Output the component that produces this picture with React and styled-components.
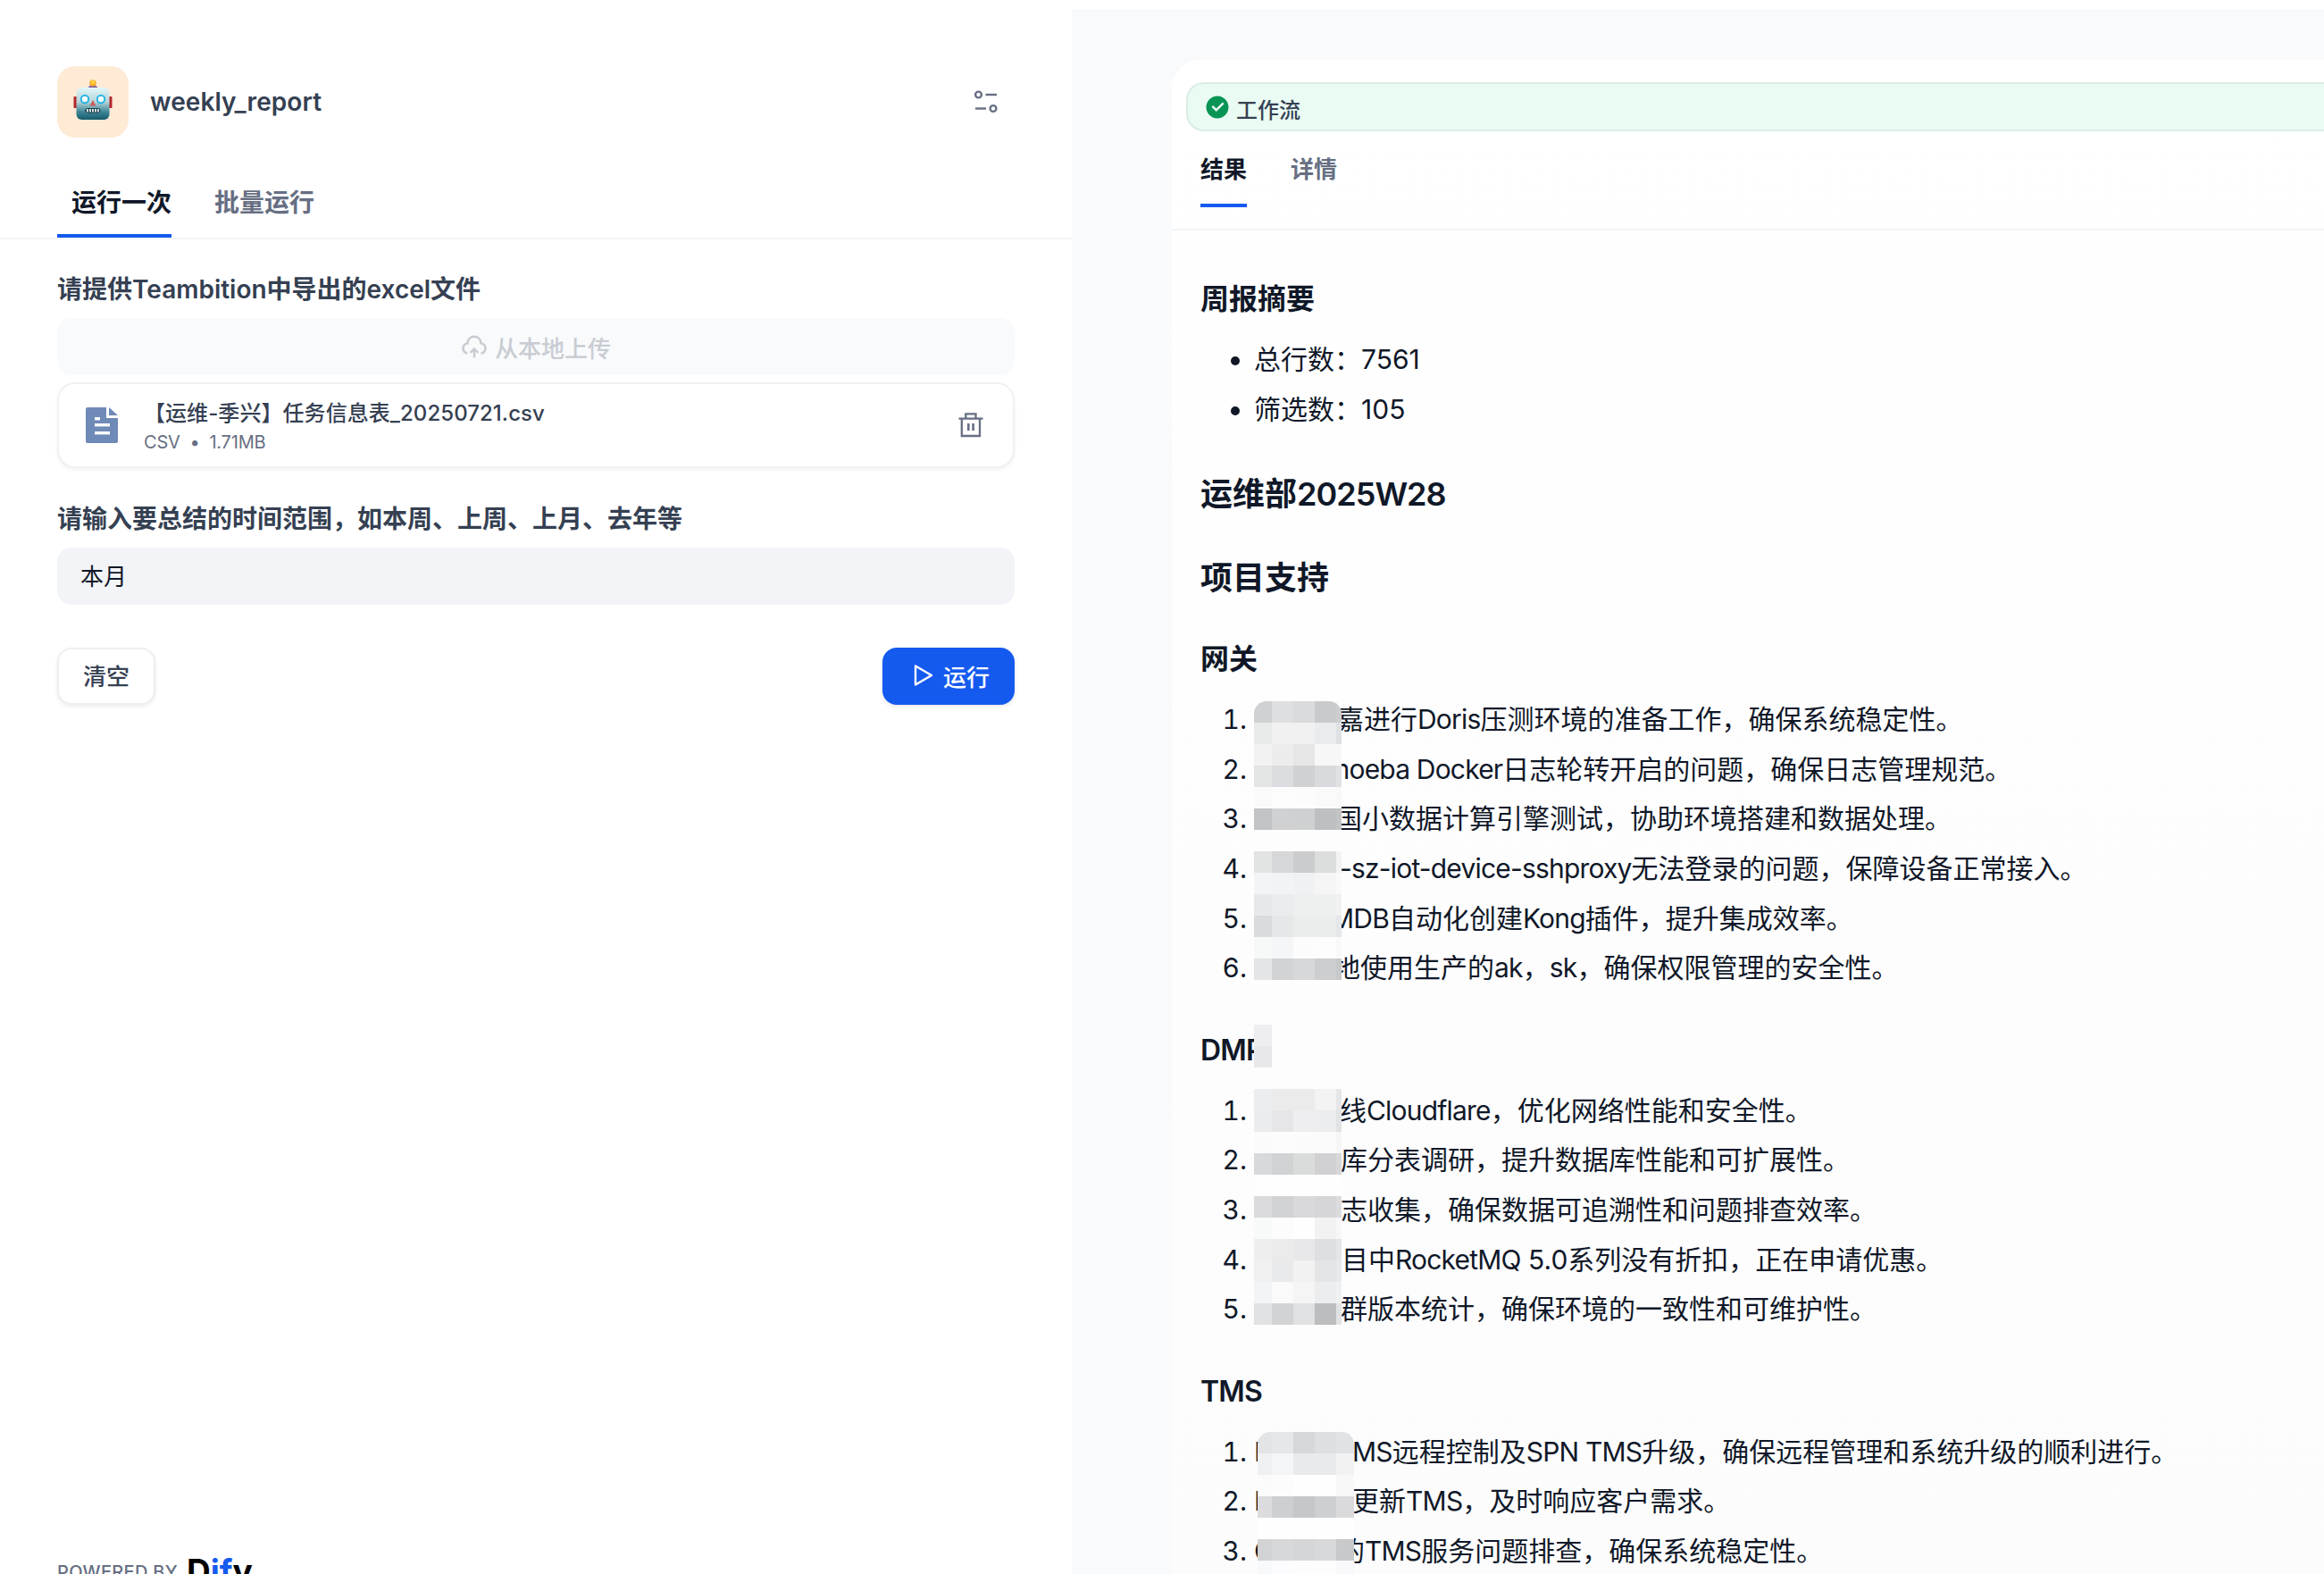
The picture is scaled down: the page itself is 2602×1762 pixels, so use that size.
import React from 'react';
import styled, { createGlobalStyle } from 'styled-components';
import { RiCheckboxCircleFill, RiUploadCloud2Line } from 'react-icons/ri';

const GlobalStyle = createGlobalStyle`
  html, body {
    margin: 0;
    padding: 0;
    background: #ffffff;
    font-family: Inter, "Noto Sans CJK SC", sans-serif;
    color: #101828;
  }
  * { box-sizing: border-box; }
`;

// latin words run a little narrower in the report than plain Inter
const Tight = styled.span`
  letter-spacing: -0.027em;
`;

// pixelated blocks that hide the names in the report
const mosaicTop = {
  cols: [20, 24, 24, 24, 6],
  rows: [
    ['#cfd1d3', '#dedfe0', '#d9dbdd', '#c9cacc', '#cdced0'],
    ['#e9eaea', '#f1f1f2', '#f1f1f2', '#eaebec', '#dfe0e3'],
    ['#f2f2f3', '#ececed', '#e6e6e7', '#f7f7f7', '#f7f7f7'],
    ['#e4e5e5', '#dcdde0', '#d0d1d3', '#d9dade', '#e0e1e3'],
    ['#fafafa', '#fdfdfd', '#fcfcfc', '#fafafa', '#f8f8f8'],
    ['#c2c3c5', '#d0d1d2', '#cfd0d1', '#bebfc1', '#c3c4c6'],
    ['#fdfdfd', '#fdfdfd', '#fdfdfd', '#fdfdfd', '#fdfdfd'],
    ['#e2e3e3', '#d6d7d9', '#cbcccd', '#dcdedd', '#f3f3f3'],
    ['#f3f4f6', '#f2f3f4', '#f0f1f2', '#f5f5f6', '#f9f9f9'],
    ['#e7e8ea', '#ebecee', '#eeefef', '#eeefef', '#f1f1f1'],
    ['#dadbdd', '#e6e7e9', '#ebecec', '#ebecec', '#e6e7e8'],
    ['#f7f8f8', '#f5f6f8', '#fcfcfc', '#fdfdfd', '#f9f9f9'],
    ['#e4e5e7', '#d2d3d5', '#d7d8d9', '#cdced0', '#c7c8ca'],
  ],
};

const mosaicHeading = {
  cols: [20],
  rows: [['#eeeef0'], ['#e8e8ea']],
};

const mosaicDmp = {
  cols: [20, 24, 24, 24, 6],
  rows: [
    ['#ecedef', '#ebebec', '#ebebec', '#f3f3f4', '#e5e6e8'],
    ['#ebecee', '#e6e6e8', '#eeeef0', '#ecedef', '#e2e3e5'],
    ['#fbfbfb', '#fcfcfc', '#fbfbfb', '#fbfbfb', '#f6f6f6'],
    ['#d8d9da', '#d1d2d3', '#dadbdb', '#d1d1d3', '#d8d8da'],
    ['#fefefe', '#fefefe', '#fefefe', '#fefefe', '#fefefe'],
    ['#dbdbdd', '#d1d2d3', '#d9d9db', '#d6d6d8', '#dcdcde'],
    ['#f8f9f9', '#fcfcfc', '#fefefe', '#f2f2f3', '#f7f7f8'],
    ['#eeeeef', '#ebebec', '#e8e8ea', '#dedfe2', '#e4e5e7'],
    ['#f0f0f1', '#e9eaec', '#f2f2f3', '#e4e5e7', '#e8e9ea'],
    ['#f3f4f6', '#f9faf9', '#f5f5f6', '#ecedee', '#eef0f1'],
    ['#e1e2e4', '#d2d3d5', '#e0e1e3', '#bcbdbf', '#e1e2e4'],
  ],
};

const mosaicTms = {
  cols: [16, 24, 24, 24, 20],
  rows: [
    ['#e3e4e6', '#e6e7e9', '#d6d7d9', '#dedfe1', '#e1e2e4'],
    ['#eff0f2', '#f4f5f6', '#e9eaec', '#e9eaec', '#f2f2f3'],
    ['#fbfbfb', '#fcfcfd', '#fefefe', '#fefefe', '#f8f8f8'],
    ['#dcdcde', '#cecfd1', '#c6c7c9', '#cecfd1', '#dadadc'],
    ['#fefefe', '#fefefe', '#fefefe', '#fefefe', '#fefefe'],
    ['#d2d3d5', '#d7d8da', '#d5d6d8', '#d8d9db', '#c8c9cb'],
    ['#f8f9fb', '#fcfcfe', '#fdfdfe', '#fdfdfe', '#f9f9fb'],
  ],
};

const gatewayItems = [
  { w: 93, text: <>嘉进行<Tight>Doris</Tight>压测环境的准备工作，确保系统稳定性。</> },
  { w: 81, text: <><Tight>moeba Docker</Tight>日志轮转开启的问题，确保日志管理规范。</> },
  { w: 91, text: '国小数据计算引擎测试，协助环境搭建和数据处理。' },
  { w: 96, text: <><Tight>-sz-iot-device-sshproxy</Tight>无法登录的问题，保障设备正常接入。</> },
  { w: 85, text: <><Tight>MDB</Tight>自动化创建<Tight>Kong</Tight>插件，提升集成效率。</> },
  { w: 89, text: <>地使用生产的<Tight>ak</Tight>，<Tight>sk</Tight>，确保权限管理的安全性。</> },
];

const dmpItems = [
  { w: 96, text: <>线<Tight>Cloudflare</Tight>，优化网络性能和安全性。</> },
  { w: 97, text: '库分表调研，提升数据库性能和可扩展性。' },
  { w: 97, text: '志收集，确保数据可追溯性和问题排查效率。' },
  { w: 98, text: <>目中<Tight>RocketMQ</Tight> 5.0系列没有折扣，正在申请优惠。</> },
  { w: 97, text: '群版本统计，确保环境的一致性和可维护性。' },
];

const tmsItems = [
  { lead: 'I', w: 102, text: <><Tight>MS</Tight>远程控制及<Tight>SPN TMS</Tight>升级，确保远程管理和系统升级的顺利进行。</> },
  { lead: 'I', w: 102, text: <>更新<Tight>TMS</Tight>，及时响应客户需求。</> },
  { lead: 'C', w: 72, text: <>的<Tight>TMS</Tight>服务问题排查，确保系统稳定性。</> },
];

const Mosaic = ({ data, left, top, round }) => {
  const width = data.cols.reduce((sum, c) => sum + c, 0);
  const height = data.rows.length * 24;
  return (
    <MosaicSvg $left={left} $top={top} $round={round} width={width} height={height} viewBox={`0 0 ${width} ${height}`}>
      {data.rows.map((row, r) => {
        let x = 0;
        return row.map((color, c) => {
          const cell = <rect key={`${r}-${c}`} x={x} y={r * 24} width={data.cols[c]} height={24} fill={color} />;
          x += data.cols[c];
          return cell;
        });
      })}
    </MosaicSvg>
  );
};

const RobotIcon = () => (
  <svg width="44" height="46" viewBox="0 0 44 46">
    <defs>
      <linearGradient id="robotHead" x1="0" y1="0" x2="0" y2="1">
        <stop offset="0" stopColor="#e2f6f9" />
        <stop offset="0.45" stopColor="#b4d4d9" />
        <stop offset="0.75" stopColor="#3f8798" />
        <stop offset="1" stopColor="#145a6c" />
      </linearGradient>
      <radialGradient id="robotBall" cx="0.5" cy="0.35" r="0.6">
        <stop offset="0" stopColor="#ffe14d" />
        <stop offset="1" stopColor="#f59a23" />
      </radialGradient>
    </defs>
    <rect x="0.5" y="20" width="4" height="13" rx="1" fill="#b3282d" />
    <rect x="39.5" y="20" width="4" height="13" rx="1" fill="#b3282d" />
    <ellipse cx="22" cy="10" rx="5" ry="2.6" fill="#7a5c9e" />
    <circle cx="22" cy="5" r="3.8" fill="url(#robotBall)" />
    <rect x="3.5" y="10" width="37" height="36" rx="6" fill="url(#robotHead)" />
    <circle cx="13" cy="23" r="4.2" fill="#ffffff" stroke="#25b4e4" strokeWidth="2" />
    <circle cx="31" cy="23" r="4.2" fill="#ffffff" stroke="#25b4e4" strokeWidth="2" />
    <path d="M22 24 L25.4 30.5 H18.6 Z" fill="#cf5a57" />
    <rect x="13.5" y="33" width="17" height="5.4" rx="2.7" fill="#17404a" />
    <path d="M16 34 V37.4 M19 34 V37.4 M22 34 V37.4 M25 34 V37.4 M28 34 V37.4" stroke="#e8eef0" strokeWidth="1.8" />
  </svg>
);

const SettingsIcon = () => (
  <svg width="28" height="28" viewBox="0 0 28 28" fill="none" stroke="#676f83" strokeWidth="2.4">
    <circle cx="5.5" cy="6" r="3.4" />
    <path d="M13.5 6 H26" />
    <path d="M2 21.5 H14" />
    <circle cx="22" cy="21.5" r="3.4" />
  </svg>
);

const FileIcon = () => (
  <svg width="36" height="40" viewBox="0 0 36 40" fill="#6f8ab7">
    <path d="M2 0 H23 V12 H36 V38 A2 2 0 0 1 34 40 H2 A2 2 0 0 1 0 38 V2 A2 2 0 0 1 2 0 Z" />
    <path d="M26 0 L36 9 H26 Z" />
    <rect x="10" y="11" width="6" height="3.4" fill="#ffffff" />
    <rect x="10" y="18" width="17" height="3.4" fill="#ffffff" />
    <rect x="10" y="27" width="17" height="3.4" fill="#ffffff" />
  </svg>
);

const TrashIcon = () => (
  <svg width="28" height="28" viewBox="0 0 28 28" fill="none" stroke="#676f83" strokeWidth="2.3">
    <path d="M8.3 6 V1.4 H19.5 V6" />
    <path d="M0.5 6.6 H27.5" />
    <path d="M3.8 6.6 V26 H24 V6.6" />
    <path d="M11.3 12 V20 M16.6 12 V20" strokeWidth="2.6" />
  </svg>
);

const PlayIcon = () => (
  <svg width="24" height="26" viewBox="0 0 24 26" fill="none" stroke="#ffffff" strokeWidth="2.4" strokeLinejoin="round">
    <path d="M3 2.5 L21 13 L3 23.5 Z" />
  </svg>
);

const ReportList = ({ items }) =>
  items.map((item, i) => (
    <li key={i}>
      {item.lead}
      <Hidden $w={item.w} />
      {item.text}
    </li>
  ));

export default function App() {
  return (
    <>
      <GlobalStyle />
      <Page>
        <LeftPanel>
          <AppHeader>
            <Avatar>
              <RobotIcon />
            </Avatar>
            <AppName>weekly_report</AppName>
            <SettingsButton>
              <SettingsIcon />
            </SettingsButton>
          </AppHeader>

          <RunTabs>
            <RunTab $active>运行一次</RunTab>
            <RunTab>批量运行</RunTab>
          </RunTabs>

          <Form>
            <Label>请提供Teambition中导出的excel文件</Label>
            <UploadBox>
              <RiUploadCloud2Line size={30} />
              从本地上传
            </UploadBox>
            <FileCard>
              <FileIcon />
              <FileInfo>
                <FileName>【运维-季兴】任务信息表_20250721.csv</FileName>
                <FileMeta>CSV&nbsp;&nbsp;•&nbsp;&nbsp;1.71MB</FileMeta>
              </FileInfo>
              <TrashIcon />
            </FileCard>

            <Label $second>请输入要总结的时间范围，如本周、上周、上月、去年等</Label>
            <TextInput>本月</TextInput>

            <Actions>
              <ClearButton>清空</ClearButton>
              <RunButton>
                <PlayIcon />
                运行
              </RunButton>
            </Actions>
          </Form>

          <Footer>
            <PoweredBy>POWERED BY</PoweredBy>
            <DifyMark>
              D<DifyBlue>if</DifyBlue>y
            </DifyMark>
          </Footer>
        </LeftPanel>

        <RightPanel>
          <ResultCard>
            <StatusBar>
              <RiCheckboxCircleFill size={30} color="#079455" />
              <StatusText>工作流</StatusText>
            </StatusBar>
            <ResultTabs>
              <ResultTab $active>结果</ResultTab>
              <ResultTab>详情</ResultTab>
            </ResultTabs>

            <Report>
              <H3 $first>周报摘要</H3>
              <BulletList>
                <li>总行数：7561</li>
                <li>筛选数：105</li>
              </BulletList>

              <H2>
                运维部<Tight>2025W28</Tight>
              </H2>
              <H2>项目支持</H2>

              <H3>网关</H3>
              <NumberList>
                <ReportList items={gatewayItems} />
                <Mosaic data={mosaicTop} left={60} top={7} round />
              </NumberList>

              <H3>
                <Tight>DMP</Tight>
                <Mosaic data={mosaicHeading} left={60} top={-5} />
              </H3>
              <NumberList>
                <ReportList items={dmpItems} />
                <Mosaic data={mosaicDmp} left={60} top={3} />
              </NumberList>

              <H3>
                <Tight>TMS</Tight>
              </H3>
              <NumberList>
                <ReportList items={tmsItems} />
                <Mosaic data={mosaicTms} left={64} top={5} round />
              </NumberList>
            </Report>
          </ResultCard>
        </RightPanel>
      </Page>
    </>
  );
}

const Page = styled.div`
  display: flex;
  width: 2602px;
  height: 1762px;
  overflow: hidden;
`;

const LeftPanel = styled.section`
  display: flex;
  flex-direction: column;
  width: 1200px;
  flex-shrink: 0;
  padding-top: 74px;
  background: #ffffff;
`;

const AppHeader = styled.div`
  display: flex;
  align-items: center;
  padding: 0 64px;
`;

const Avatar = styled.div`
  display: flex;
  align-items: center;
  justify-content: center;
  width: 80px;
  height: 80px;
  padding-bottom: 6px;
  border-radius: 20px;
  background: #ffead5;
`;

const AppName = styled.div`
  margin-left: 24px;
  font-size: 28px;
  letter-spacing: 0.08px;
  font-weight: 600;
  color: #354052;
`;

const SettingsButton = styled.div`
  display: flex;
  margin-left: auto;
  margin-right: 18px;
`;

const RunTabs = styled.div`
  display: flex;
  gap: 32px;
  margin-top: 53px;
  padding: 0 64px;
  border-bottom: 2px solid #f2f4f7;
`;

const RunTab = styled.div`
  padding: 0 0 15px 16px;
  font-size: 28px;
  line-height: 40px;
  font-weight: 600;
  color: ${(p) => (p.$active ? '#101828' : '#676f83')};
  border-bottom: 4px solid ${(p) => (p.$active ? '#155aef' : 'transparent')};
`;

const Form = styled.div`
  display: flex;
  flex-direction: column;
  padding: 36px 64px 0;
`;

const Label = styled.div`
  margin-top: ${(p) => (p.$second ? '37px' : '0')};
  font-size: 28px;
  line-height: 40px;
  font-weight: 600;
  color: #354052;
`;

const UploadBox = styled.div`
  display: flex;
  align-items: center;
  justify-content: center;
  gap: 8px;
  height: 64px;
  margin-top: 12px;
  border-radius: 16px;
  background: #f9fafb;
  font-size: 26px;
  font-weight: 500;
  color: #c8ccd3;
`;

const FileCard = styled.div`
  display: flex;
  align-items: center;
  height: 96px;
  margin-top: 8px;
  padding: 0 33px 0 30px;
  border: 2px solid #f0f1f4;
  border-radius: 20px;
  background: #ffffff;
  box-shadow: 0 2px 4px rgba(16, 24, 40, 0.05);
`;

const FileInfo = styled.div`
  display: flex;
  flex-direction: column;
  flex: 1;
  margin-left: 29px;
  padding-top: 2px;
`;

const FileName = styled.div`
  font-size: 24px;
  line-height: 36px;
  letter-spacing: 0.06px;
  font-weight: 500;
  color: #354052;
`;

const FileMeta = styled.div`
  font-size: 20px;
  line-height: 28px;
  letter-spacing: -0.2px;
  color: #676f83;
`;

const TextInput = styled.div`
  display: flex;
  align-items: center;
  height: 64px;
  margin-top: 12px;
  padding: 0 26px 3px;
  border-radius: 16px;
  background: #f2f4f7;
  font-size: 26px;
  color: #101828;
`;

const Actions = styled.div`
  display: flex;
  justify-content: space-between;
  margin-top: 48px;
`;

const ClearButton = styled.div`
  display: flex;
  align-items: center;
  justify-content: center;
  width: 110px;
  height: 64px;
  padding-bottom: 3px;
  border: 2px solid #eceef1;
  border-radius: 16px;
  background: #ffffff;
  box-shadow: 0 2px 4px rgba(16, 24, 40, 0.08);
  font-size: 26px;
  font-weight: 500;
  color: #354052;
`;

const RunButton = styled.div`
  display: flex;
  align-items: center;
  gap: 10px;
  width: 148px;
  height: 64px;
  padding: 0 0 2px 34px;
  border-radius: 16px;
  background: #155aef;
  box-shadow: 0 2px 4px rgba(16, 24, 40, 0.1);
  font-size: 26px;
  font-weight: 500;
  color: #ffffff;
`;

const Footer = styled.div`
  display: flex;
  align-items: flex-start;
  gap: 10px;
  height: 19px;
  margin-top: auto;
  padding: 0 64px;
`;

const PoweredBy = styled.div`
  margin-top: 5px;
  font-size: 20px;
  line-height: 24px;
  letter-spacing: 0.3px;
  font-weight: 500;
  color: #676f83;
`;

const DifyMark = styled.div`
  margin-top: -6px;
  font-size: 37px;
  line-height: 44px;
  font-weight: 700;
  color: #000000;
`;

const DifyBlue = styled.span`
  color: #155aef;
`;

const RightPanel = styled.section`
  flex: 1;
  min-width: 0;
  margin-top: 10px;
  padding: 57px 0 0 112px;
  background: #f9fafb;
`;

const ResultCard = styled.div`
  height: 1700px;
  padding-top: 25px;
  border-top-left-radius: 32px;
  background: linear-gradient(#ffffff, #fcfcfd);
`;

const StatusBar = styled.div`
  display: flex;
  align-items: center;
  gap: 6px;
  height: 55px;
  margin-left: 16px;
  padding-left: 18px;
  border: 2px solid #d9ede4;
  border-right: 0;
  border-radius: 20px 0 0 20px;
  background: #e9fbf2;
`;

const StatusText = styled.span`
  padding-top: 3px;
  font-size: 24px;
  font-weight: 500;
  color: #354052;
`;

const ResultTabs = styled.div`
  display: flex;
  gap: 49px;
  height: 111px;
  padding: 25px 0 0 32px;
  border-bottom: 2px solid #f2f4f7;
`;

const ResultTab = styled.div`
  height: 60px;
  font-size: 26px;
  line-height: 36px;
  font-weight: 600;
  color: ${(p) => (p.$active ? '#101828' : '#676f83')};
  border-bottom: 4px solid ${(p) => (p.$active ? '#155aef' : 'transparent')};
`;

const Report = styled.div`
  padding: 53px 0 0 32px;
  color: #101828;
`;

const H2 = styled.h2`
  margin: 40px 0 0;
  font-size: 36px;
  line-height: 54px;
  font-weight: 600;
`;

const H3 = styled.h3`
  position: relative;
  margin: ${(p) => (p.$first ? '0' : '40px')} 0 16px;
  font-size: 32px;
  line-height: 48px;
  font-weight: 600;
`;

const BulletList = styled.ul`
  margin: 0;
  padding-left: 60px;
  font-size: 30px;
  line-height: 55.6px;
`;

const NumberList = styled.ol`
  position: relative;
  margin: 0;
  padding-left: 60px;
  font-size: 30px;
  line-height: 55.6px;
`;

const Hidden = styled.span`
  display: inline-block;
  width: ${(p) => p.$w}px;
`;

const MosaicSvg = styled.svg`
  position: absolute;
  left: ${(p) => p.$left}px;
  top: ${(p) => p.$top}px;
  shape-rendering: crispEdges;
  border-radius: ${(p) => (p.$round ? '14px 14px 0 0' : '0')};
`;
